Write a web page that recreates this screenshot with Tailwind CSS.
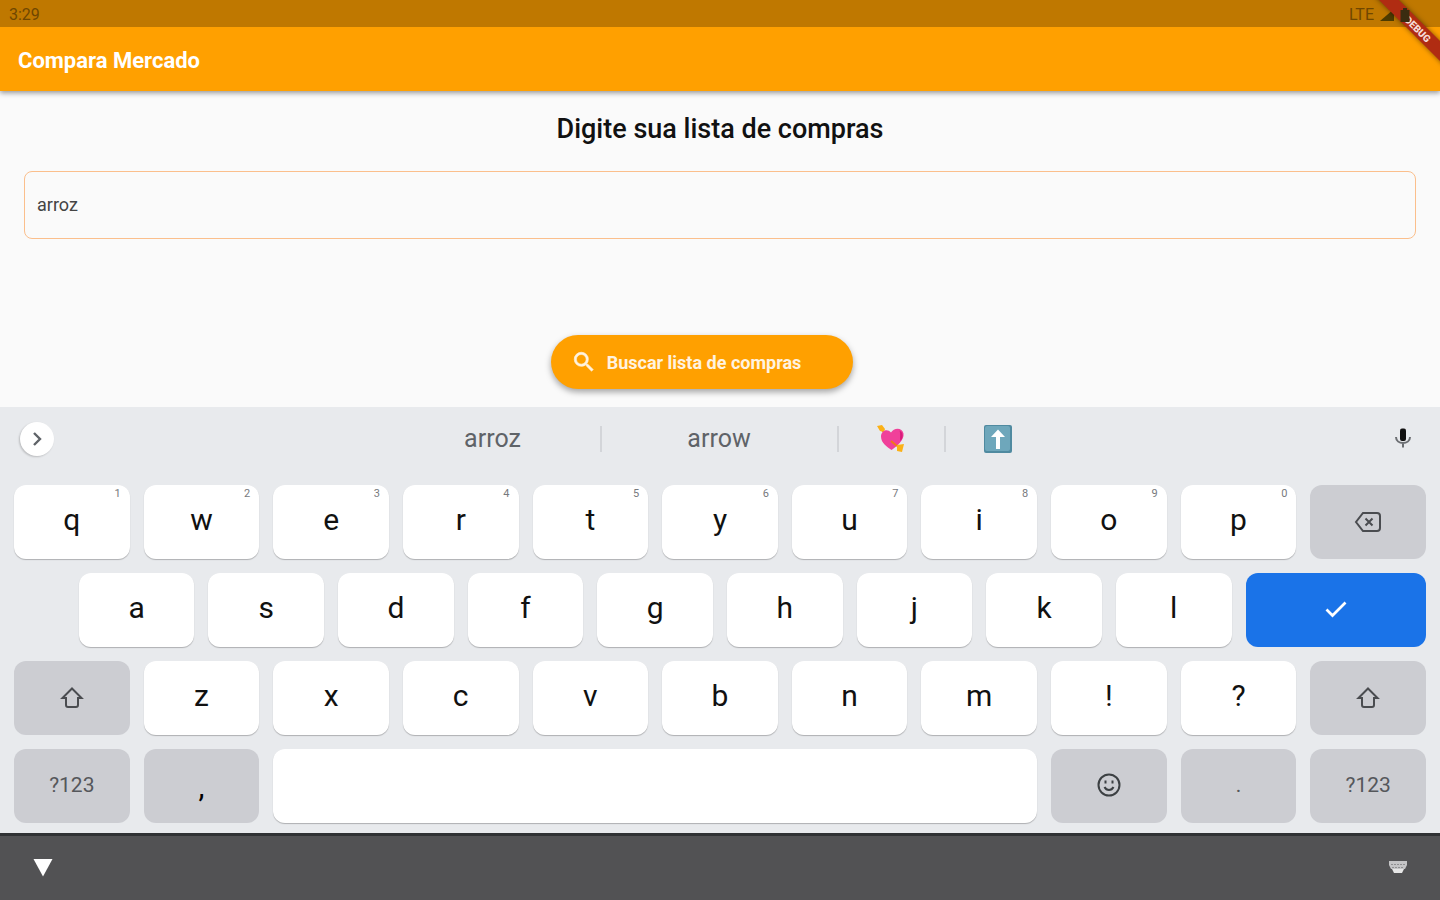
<!DOCTYPE html>
<html lang="pt-BR">

<head>
    <meta charset="utf-8">
    <title>Compara Mercado</title>
    <meta name="viewport" content="width=device-width, initial-scale=1">
    <script src="https://cdn.jsdelivr.net/npm/@tailwindcss/browser@4"></script>
</head>

<body class="min-h-screen flex flex-col overflow-x-hidden bg-[#fafafa] font-['Roboto',sans-serif] text-black">

    <!-- Barra de status + barra do app -->
    <header class="relative bg-[#ffa000] shadow-[0_2px_5px_rgba(0,0,0,0.4)]">
        <div class="h-[27px] pt-[2px] pl-[9px] pr-[30px] flex items-center justify-between bg-[#bf7800] text-[16px] text-[#704700]">
            <span>3:29</span>
            <div class="flex items-center gap-[6px]">
                <span>LTE</span>
                <svg class="w-[14px] h-[12px]" viewBox="0 0 14 12" fill="#4d3b00"><path d="M14 0v12H0z"/></svg>
                <svg class="relative z-10 w-[10px] h-[14px]" viewBox="0 0 10 14" fill="#3a2c10"><path d="M3 0h4v2h2.500v12h-9V2H3z"/></svg>
            </div>
        </div>
        <div class="h-16 pt-[2px] px-[18px] flex items-center">
            <h1 class="text-[22px] font-bold text-white">Compara Mercado</h1>
        </div>

        <!-- Faixa de debug no canto -->
        <div class="absolute top-0 right-0 w-20 h-20 overflow-hidden">
            <div class="absolute top-[22px] -right-[38px] w-[120px] h-[14px] rotate-45 flex items-center justify-center bg-[#b02c12] text-[10px] font-black text-[#f6dcd8] shadow-[0_0_5px_rgba(0,0,0,0.5)]">DEBUG</div>
        </div>
    </header>

    <main class="flex-1 px-6 flex flex-col items-center">
        <label for="lista" class="mt-5 text-[27px] leading-9 font-medium text-[#111]">Digite sua lista de compras</label>
        <input id="lista" type="text" value="arroz"
            class="mt-6 w-full h-[68px] px-3 pb-[2px] rounded-lg border border-[#fbbf8c] bg-transparent text-[18px] text-[#444] outline-none">
        <button type="button"
            class="mt-24 mb-4 mr-9 h-[54px] pl-5 pr-[52px] flex items-center gap-[10px] rounded-full bg-[#ffa000] text-[18px] font-bold text-[#fff3e0] shadow-[0_3px_6px_rgba(0,0,0,0.35)]">
            <svg class="w-[26px] h-[26px]" viewBox="0 0 24 24" fill="currentColor" stroke="currentColor" stroke-width=".6"><path d="M15.500 14h-.79l-.28-.27A6.470 6.470 0 0 0 16 9.500 6.500 6.500 0 1 0 9.500 16c1.610 0 3.090-.59 4.230-1.570l.27.28v.79l5 4.990L20.490 19l-4.990-5zm-6 0C7.010 14 5 11.990 5 9.500S7.010 5 9.500 5 14 7.010 14 9.500 11.990 14 9.500 14z"/></svg>
            Buscar lista de compras
        </button>
    </main>

    <!-- Teclado -->
    <section class="px-[14px] pb-[10px] bg-[#e8eaed]">
        <!-- Sugestões -->
        <div class="h-16 mb-[14px] px-[6px] flex items-center justify-between">
            <button type="button" aria-label="Expandir" class="w-[34px] h-[34px] flex items-center justify-center rounded-full bg-white shadow-[-1px_1px_2px_rgba(0,0,0,0.2)]">
                <svg class="w-5 h-5" viewBox="0 0 20 20" fill="none" stroke="#5f6368" stroke-width="2.400"><path d="M7 4l6 6-6 6"/></svg>
            </button>
            <div class="mr-[5px] flex items-center text-[25px] text-[#5f6368]">
                <button type="button" class="w-[214px]">arroz</button>
                <span class="w-[2px] h-[26px] bg-[#d3d5d9]"></span>
                <button type="button" class="w-[235px]">arrow</button>
                <span class="w-[2px] h-[26px] bg-[#d3d5d9]"></span>
                <button type="button" aria-label="Coração com flecha" class="w-[105px] flex justify-center">
                    <svg class="w-7 h-7" viewBox="0 0 28 28">
                        <path d="M3 3l21 21" stroke="#d9822b" stroke-width="2"/>
                        <path d="M0 1l5-1 3 4-1 3-4-1z" fill="#fbb117"/>
                        <path d="M14.500 25C10 22 4 18 4 11.500 4 6 10 3 14 7.500 17 2 25.500 2.500 26.500 8.500 27.500 15 20 21 14.500 25z" fill="#f0409a"/>
                        <path d="M22.500 5.500c4 2 4 7 1 10.500-1-3 .5-6-1-10.500z" fill="#d81b7a"/>
                        <path d="M14 16l6 5" stroke="#f07818" stroke-width="2"/>
                        <path d="M20 20l7-1-2 8-5-1z" fill="#fbb117"/>
                    </svg>
                </button>
                <span class="w-[2px] h-[26px] bg-[#d3d5d9]"></span>
                <button type="button" aria-label="Seta para cima" class="w-[104px] flex justify-center">
                    <svg class="w-7 h-7" viewBox="0 0 28 28">
                        <rect width="28" height="28" rx="2" fill="#4f8aa0"/>
                        <rect x="1" y="1" width="25" height="25" rx="2" fill="#6ea7bb"/>
                        <path d="M14 4.500l7 7.500h-5v12h-4V12H7z" fill="#fff"/>
                    </svg>
                </button>
            </div>
            <button type="button" aria-label="Voz" class="w-[34px] flex justify-center">
                <svg class="w-6 h-6" viewBox="0 0 24 24">
                    <rect x="9" y="1.500" width="6" height="12.500" rx="2" fill="#111"/>
                    <path d="M5 10c0 8 14 8 14 0M12 16v4.500" fill="none" stroke="#6b6e72" stroke-width="2"/>
                </svg>
            </button>
        </div>

        <!-- As teclas são geradas pelo script: 22 colunas, cada tecla normal ocupa 2 -->
        <div id="teclas" class="grid grid-cols-22 gap-[14px]"></div>
    </section>

    <!-- Barra de navegação -->
    <nav class="h-[67px] px-8 flex items-center justify-between border-t-[3px] border-[#303234] bg-[#525254]">
        <button type="button" aria-label="Voltar">
            <svg class="w-[22px] h-[20px]" viewBox="0 0 22 20"><path d="M1.500 1h19L11 18.500z" fill="#fff"/></svg>
        </button>
        <button type="button" aria-label="Trocar teclado">
            <svg class="w-5 h-4" viewBox="0 0 20 16">
                <path d="M1 1h18v4l-2 4H3L1 5z" fill="#c4c4c6"/>
                <path d="M3 4.500h14M4 7.500h12" stroke="#8f8f91" stroke-dasharray="2 1"/>
                <path d="M4 9h12l-2 4H6z" fill="#e6e6e6"/>
            </svg>
        </button>
    </nav>

    <script>
        const apagar = '<svg class="w-7 h-7" viewBox="0 0 28 28" fill="none" stroke="#4a4c50" stroke-width="2"><path d="M9 5h14q3 0 3 3v12q0 3-3 3H9l-7-9z"/><path d="M11.500 10.500l7 7M18.500 10.500l-7 7"/></svg>';
        const shift = '<svg class="w-6 h-6" viewBox="0 0 24 24" fill="none" stroke="#4a4c50" stroke-width="2"><path d="M12 2.500L21.500 12H18v7q0 2-2 2H8q-2 0-2-2v-7H2.500z"/></svg>';
        const ok = '<svg class="mb-[2px] w-6 h-6" viewBox="0 0 24 24" fill="none" stroke="#fff" stroke-width="2.700"><path d="M2.500 12.500l6 6L21.500 5.500"/></svg>';
        const emoji = '<svg class="mb-[2px] w-6 h-6" viewBox="0 0 24 24" fill="none" stroke="#3c4043" stroke-width="2"><circle cx="12" cy="12" r="10.500"/><path d="M8.500 7.500v3M15.500 7.500v3M7.500 14c2 4 7 4 9 0"/></svg>';

        const clara = 'relative col-span-2 h-[74px] flex items-center justify-center rounded-xl bg-white pb-[6px] text-[30px] text-[#111] shadow-[0_1px_1px_rgba(0,0,0,0.25)]';
        const cinza = 'col-span-2 h-[74px] flex items-center justify-center rounded-xl bg-[#cccdd2] text-[21px] text-[#55575b]';

        function tecla(classe, conteudo, nome) {
            const botao = document.createElement('button');
            botao.type = 'button';
            botao.className = classe;
            botao.innerHTML = conteudo;
            if (nome) botao.setAttribute('aria-label', nome);
            document.getElementById('teclas').appendChild(botao);
            return botao;
        }

        // Primeira linha, com os números no canto
        'qwertyuiop'.split('').forEach((letra, i) => {
            tecla(clara, `${letra}<span class="absolute top-px right-[9px] text-[11px] leading-4 text-[#77797d]">${(i + 1) % 10}</span>`);
        });
        tecla(cinza, apagar, 'Apagar');

        // Segunda linha, deslocada meia tecla
        'asdfghjkl'.split('').forEach((letra, i) => {
            const botao = tecla(clara, letra);
            if (i === 0) botao.classList.add('col-start-2');
        });
        tecla('col-span-3 h-[74px] flex items-center justify-center rounded-xl bg-[#1a73e8]', ok, 'Concluir');

        tecla(cinza, shift, 'Shift');
        'zxcvbnm!?'.split('').forEach(letra => tecla(clara, letra));
        tecla(cinza, shift, 'Shift');

        tecla(cinza, '?123');
        tecla('col-span-2 h-[74px] flex items-center justify-center rounded-xl bg-[#cccdd2] text-[30px]', ',');
        tecla('col-span-12 h-[74px] rounded-xl bg-white shadow-[0_1px_1px_rgba(0,0,0,0.25)]', '', 'Espaço');
        tecla(cinza, emoji, 'Emoji');
        tecla(cinza, '.');
        tecla(cinza, '?123');
    </script>
</body>

</html>
